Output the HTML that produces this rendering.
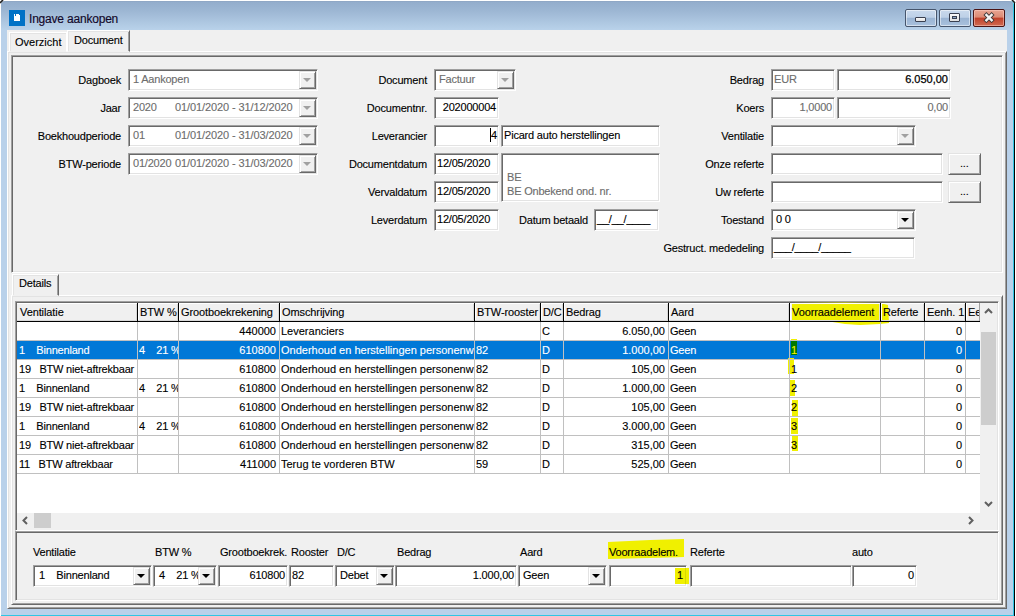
<!DOCTYPE html>
<html><head><meta charset="utf-8">
<style>
*{box-sizing:border-box;margin:0;padding:0}
html,body{width:1016px;height:616px;overflow:hidden;background:#fff}
body{position:relative;font-family:"Liberation Sans",sans-serif;font-size:11px;letter-spacing:-0.2px;color:#000;-webkit-text-stroke:0.12px}
.a{position:absolute}
.t{position:absolute;white-space:pre;line-height:13px}
.r{text-align:right}
.sunk{position:absolute;border:1px solid;border-color:#a0a0a0 #fff #fff #a0a0a0;box-shadow:inset 1px 1px 0 #696969,inset -1px -1px 0 #e3e3e3;background:#fff}
.sunkp{position:absolute;border:1px solid;border-color:#a0a0a0 #fff #fff #a0a0a0;box-shadow:inset 1px 1px 0 #696969,inset -1px -1px 0 #e3e3e3;background:#f0f0f0}
.raised{position:absolute;border:1px solid;border-color:#e3e3e3 #696969 #696969 #e3e3e3;box-shadow:inset 1px 1px 0 #fff,inset -1px -1px 0 #a0a0a0;background:#f0f0f0}
.tabp{position:absolute;border:1px solid;border-color:#fff #696969 #696969 #fff;box-shadow:inset 1px 1px 0 #e3e3e3,inset -1px -1px 0 #a0a0a0;background:#f0f0f0}
.gray{color:#6d6d6d}
.arr{position:absolute;width:0;height:0;border-left:4px solid transparent;border-right:4px solid transparent;border-top:4px solid #000}
.arr.dis{border-top-color:#a0a0a0}
</style></head><body>
<div class="a" style="left:1014px;top:3px;width:1px;height:613px;background:#000"></div>
<div class="a" style="left:1px;top:1px;width:1013px;height:615px;background:#b9d1ea;border-right:1px solid #2fc6e4;border-bottom:1px solid #2fc6e4;border-radius:4px 4px 0 0"></div>
<div class="a" style="left:1px;top:1px;width:1012px;height:29px;background:linear-gradient(#93adcc 0,#9cb6d3 30%,#b9d2ea 100%);border-top:1px solid #8fa7c5;border-radius:4px 4px 0 0"></div>
<svg class="a" style="left:0;top:0" width="4" height="4"><path d="M0 3 L3 0" stroke="#202020" stroke-width="1.6"/></svg>
<svg class="a" style="left:1011px;top:0" width="5" height="5"><path d="M1 0 L4 3" stroke="#202020" stroke-width="1.6"/></svg>
<div class="a" style="left:9px;top:10px;width:16px;height:16px;background:#0072c6"></div>
<div class="a" style="left:14px;top:14px;width:6px;height:7px;background:#fff"></div>
<div class="a" style="left:15px;top:14px;width:1px;height:2px;background:#0072c6"></div>
<div class="a" style="left:19px;top:14px;width:1px;height:1px;background:#0072c6"></div>
<div class="t " style="left:29px;top:12px;font-size:12px;line-height:15px;color:#12082a;-webkit-text-stroke:0.15px">Ingave aankopen</div>
<div class="a" style="left:905px;top:9px;width:32px;height:18px;border:1px solid #46556c;border-radius:2px;background:linear-gradient(#c9d9ec 0,#bdd0e7 46%,#9ab4d3 50%,#a9c1dd 100%);box-shadow:inset 0 0 0 1px rgba(255,255,255,.5)"></div>
<div class="a" style="left:915px;top:17px;width:11px;height:5px;background:linear-gradient(#fafafa,#e0e0e0);border:1px solid #3a4050;border-radius:1px"></div>
<div class="a" style="left:939px;top:9px;width:32px;height:18px;border:1px solid #46556c;border-radius:2px;background:linear-gradient(#c9d9ec 0,#bdd0e7 46%,#9ab4d3 50%,#a9c1dd 100%);box-shadow:inset 0 0 0 1px rgba(255,255,255,.5)"></div>
<div class="a" style="left:949px;top:13px;width:11px;height:9px;background:linear-gradient(#fafafa,#e0e0e0);border:1px solid #3a4050;border-radius:1px"></div>
<div class="a" style="left:952px;top:16px;width:5px;height:3px;background:#8fa7c6;border:1px solid #3a4050"></div>
<div class="a" style="left:973px;top:9px;width:32px;height:18px;border:1px solid #4a1414;border-radius:2px;background:linear-gradient(#e8a592 0,#dc8a74 45%,#c0402a 50%,#d06b52 100%);box-shadow:inset 0 0 0 1px rgba(255,210,200,.5)"></div>
<svg class="a" style="left:983px;top:12px" width="12" height="11" viewBox="0 0 12 11"><path d="M3.4 3 L8.6 8.2 M8.6 3 L3.4 8.2" stroke="#403838" stroke-width="4.2" stroke-linecap="square"/><path d="M3.4 3 L8.6 8.2 M8.6 3 L3.4 8.2" stroke="#f4f4f4" stroke-width="2.4" stroke-linecap="square"/></svg>
<div class="a" style="left:7px;top:30px;width:1000px;height:579px;background:#f0f0f0"></div>
<div class="tabp" style="left:7px;top:51px;width:1000px;height:558px;"></div>
<div class="a" style="left:9px;top:32px;width:58px;height:20px;border:1px solid;border-color:#fff #fff transparent #fff;box-shadow:inset 1px 1px 0 #e3e3e3;background:#f0f0f0"></div>
<div class="t " style="left:15px;top:36px;letter-spacing:0">Overzicht</div>
<div class="a" style="left:67px;top:30px;width:63px;height:22px;border:1px solid;border-color:#fff #696969 transparent #fff;box-shadow:inset 1px 1px 0 #e3e3e3,inset -1px 0 0 #a0a0a0;background:#f0f0f0"></div>
<div class="t " style="left:74px;top:34px;">Document</div>
<div class="sunkp" style="left:11px;top:55px;width:992px;height:218px;"></div>
<div class="t r " style="left:-179px;width:300px;top:74px;">Dagboek</div>
<div class="t r " style="left:-179px;width:300px;top:102px;">Jaar</div>
<div class="t r " style="left:-179px;width:300px;top:130px;">Boekhoudperiode</div>
<div class="t r " style="left:-179px;width:300px;top:158px;">BTW-periode</div>
<div class="sunk" style="left:128px;top:69px;width:190px;height:22px;"></div>
<div class="t gray" style="left:133px;top:73px;">1 Aankopen</div>
<div class="raised" style="left:299px;top:71px;width:17px;height:18px;"></div>
<div class="arr dis" style="left:303px;top:78px"></div>
<div class="sunk" style="left:128px;top:97px;width:190px;height:22px;"></div>
<div class="raised" style="left:299px;top:99px;width:17px;height:18px;"></div>
<div class="arr dis" style="left:303px;top:106px"></div>
<div class="t gray" style="left:133px;top:101px;">2020</div>
<div class="t gray" style="left:175px;top:101px;letter-spacing:-0.1px">01/01/2020 - 31/12/2020</div>
<div class="sunk" style="left:128px;top:125px;width:190px;height:22px;"></div>
<div class="raised" style="left:299px;top:127px;width:17px;height:18px;"></div>
<div class="arr dis" style="left:303px;top:134px"></div>
<div class="t gray" style="left:133px;top:129px;">01</div>
<div class="t gray" style="left:175px;top:129px;letter-spacing:-0.1px">01/01/2020 - 31/03/2020</div>
<div class="sunk" style="left:128px;top:153px;width:190px;height:22px;"></div>
<div class="raised" style="left:299px;top:155px;width:17px;height:18px;"></div>
<div class="arr dis" style="left:303px;top:162px"></div>
<div class="t gray" style="left:133px;top:157px;">01/2020</div>
<div class="t gray" style="left:175px;top:157px;letter-spacing:-0.1px">01/01/2020 - 31/03/2020</div>
<div class="t r " style="left:127px;width:300px;top:74px;">Document</div>
<div class="t r " style="left:127px;width:300px;top:102px;">Documentnr.</div>
<div class="t r " style="left:127px;width:300px;top:130px;">Leverancier</div>
<div class="t r " style="left:127px;width:300px;top:158px;">Documentdatum</div>
<div class="t r " style="left:127px;width:300px;top:186px;">Vervaldatum</div>
<div class="t r " style="left:127px;width:300px;top:214px;">Leverdatum</div>
<div class="sunk" style="left:434px;top:69px;width:82px;height:22px;"></div>
<div class="t gray" style="left:439px;top:73px;">Factuur</div>
<div class="raised" style="left:497px;top:71px;width:17px;height:18px;"></div>
<div class="arr dis" style="left:501px;top:78px"></div>
<div class="sunk" style="left:434px;top:97px;width:65px;height:22px;background:#fff"></div>
<div class="t r " style="left:196px;width:300px;top:101px;">202000004</div>
<div class="sunk" style="left:434px;top:125px;width:65px;height:22px;background:#fff"></div>
<div class="t r " style="left:197px;width:300px;top:129px;">4</div>
<div class="a" style="left:490px;top:128px;width:1px;height:14px;background:#000"></div>
<div class="sunk" style="left:501px;top:125px;width:159px;height:22px;background:#fff"></div>
<div class="t " style="left:504px;top:129px;">Picard auto herstellingen</div>
<div class="sunk" style="left:434px;top:153px;width:65px;height:22px;background:#fff"></div>
<div class="t " style="left:437px;top:157px;">12/05/2020</div>
<div class="sunk" style="left:501px;top:153px;width:159px;height:49px;"></div>
<div class="t gray" style="left:507px;top:171px;">BE</div>
<div class="t gray" style="left:507px;top:185px;">BE Onbekend ond. nr.</div>
<div class="sunk" style="left:434px;top:181px;width:65px;height:22px;background:#fff"></div>
<div class="t " style="left:437px;top:185px;">12/05/2020</div>
<div class="sunk" style="left:434px;top:209px;width:65px;height:22px;background:#fff"></div>
<div class="t " style="left:437px;top:213px;">12/05/2020</div>
<div class="t " style="left:519px;top:214px;">Datum betaald</div>
<div class="sunk" style="left:594px;top:209px;width:65px;height:22px;background:#fff"></div>
<div class="t " style="left:597px;top:213px;">__/__/____</div>
<div class="t r " style="left:464px;width:300px;top:74px;">Bedrag</div>
<div class="t r " style="left:464px;width:300px;top:102px;">Koers</div>
<div class="t r " style="left:464px;width:300px;top:130px;">Ventilatie</div>
<div class="t r " style="left:464px;width:300px;top:158px;">Onze referte</div>
<div class="t r " style="left:464px;width:300px;top:186px;">Uw referte</div>
<div class="t r " style="left:464px;width:300px;top:214px;">Toestand</div>
<div class="t r " style="left:464px;width:300px;top:242px;">Gestruct. mededeling</div>
<div class="sunk" style="left:771px;top:69px;width:64px;height:22px;background:#fff"></div>
<div class="t gray" style="left:774px;top:73px;">EUR</div>
<div class="sunk" style="left:837px;top:69px;width:114px;height:22px;background:#fff"></div>
<div class="t r " style="left:648px;width:300px;top:73px;-webkit-text-stroke:0.25px;letter-spacing:0">6.050,00</div>
<div class="sunk" style="left:771px;top:97px;width:64px;height:22px;background:#fff"></div>
<div class="t r gray" style="left:532px;width:300px;top:101px;">1,0000</div>
<div class="sunk" style="left:837px;top:97px;width:114px;height:22px;background:#fff"></div>
<div class="t r gray" style="left:648px;width:300px;top:101px;">0,00</div>
<div class="sunk" style="left:771px;top:125px;width:145px;height:22px;"></div>
<div class="raised" style="left:897px;top:127px;width:17px;height:18px;"></div>
<div class="arr dis" style="left:901px;top:134px"></div>
<div class="sunk" style="left:771px;top:153px;width:172px;height:22px;background:#fff"></div>
<div class="raised" style="left:948px;top:153px;width:33px;height:22px;"></div>
<div class="t " style="left:960px;top:157px;">...</div>
<div class="sunk" style="left:771px;top:181px;width:172px;height:22px;background:#fff"></div>
<div class="raised" style="left:948px;top:181px;width:33px;height:22px;"></div>
<div class="t " style="left:960px;top:185px;">...</div>
<div class="sunk" style="left:771px;top:209px;width:145px;height:22px;"></div>
<div class="t " style="left:776px;top:213px;">0 0</div>
<div class="raised" style="left:897px;top:211px;width:17px;height:18px;"></div>
<div class="arr" style="left:901px;top:218px"></div>
<div class="sunk" style="left:771px;top:237px;width:144px;height:22px;background:#fff"></div>
<div class="t " style="left:774px;top:241px;">___/____/_____</div>
<div class="tabp" style="left:11px;top:295px;width:992px;height:310px;"></div>
<div class="a" style="left:12px;top:274px;width:47px;height:22px;border:1px solid;border-color:#fff #696969 transparent #fff;box-shadow:inset 1px 1px 0 #e3e3e3,inset -1px 0 0 #a0a0a0;background:#f0f0f0"></div>
<div class="t " style="left:19px;top:277px;">Details</div>
<div class="sunk" style="left:15px;top:301px;width:984px;height:230px;"></div>
<div class="a" style="left:17px;top:303px;width:963px;height:18px;background:#f0f0f0"></div>
<div class="a" style="left:17px;top:322px;width:963px;height:191px;background:#fff"></div>
<svg class="a" style="left:0;top:0" width="1016" height="616"><path d="M792 303 L845 302.5 L880 303 L888 305 L889 323 L880 324 L860 325 L845 324 L820 320 L792 320 Z" fill="#f0f000"/></svg>
<div class="a" style="left:17px;top:303px;width:963px;height:1px;background:#fff"></div>
<div class="a" style="left:17px;top:320px;width:963px;height:1px;background:#d8d8d8"></div>
<div class="a" style="left:17px;top:321px;width:963px;height:1px;background:#000"></div>
<div class="a" style="left:136px;top:304px;width:1px;height:17px;background:#d8d8d8"></div>
<div class="a" style="left:138px;top:303px;width:1px;height:17px;background:#fff"></div>
<div class="a" style="left:177px;top:304px;width:1px;height:17px;background:#d8d8d8"></div>
<div class="a" style="left:179px;top:303px;width:1px;height:17px;background:#fff"></div>
<div class="a" style="left:278px;top:304px;width:1px;height:17px;background:#d8d8d8"></div>
<div class="a" style="left:280px;top:303px;width:1px;height:17px;background:#fff"></div>
<div class="a" style="left:473px;top:304px;width:1px;height:17px;background:#d8d8d8"></div>
<div class="a" style="left:475px;top:303px;width:1px;height:17px;background:#fff"></div>
<div class="a" style="left:539px;top:304px;width:1px;height:17px;background:#d8d8d8"></div>
<div class="a" style="left:541px;top:303px;width:1px;height:17px;background:#fff"></div>
<div class="a" style="left:562px;top:304px;width:1px;height:17px;background:#d8d8d8"></div>
<div class="a" style="left:564px;top:303px;width:1px;height:17px;background:#fff"></div>
<div class="a" style="left:667px;top:304px;width:1px;height:17px;background:#d8d8d8"></div>
<div class="a" style="left:669px;top:303px;width:1px;height:17px;background:#fff"></div>
<div class="a" style="left:788px;top:304px;width:1px;height:17px;background:#d8d8d8"></div>
<div class="a" style="left:790px;top:303px;width:1px;height:17px;background:#fff"></div>
<div class="a" style="left:879px;top:304px;width:1px;height:17px;background:#d8d8d8"></div>
<div class="a" style="left:881px;top:303px;width:1px;height:17px;background:#fff"></div>
<div class="a" style="left:923px;top:304px;width:1px;height:17px;background:#d8d8d8"></div>
<div class="a" style="left:925px;top:303px;width:1px;height:17px;background:#fff"></div>
<div class="a" style="left:964px;top:304px;width:1px;height:17px;background:#d8d8d8"></div>
<div class="a" style="left:966px;top:303px;width:1px;height:17px;background:#fff"></div>
<div class="a" style="left:137px;top:303px;width:1px;height:19px;background:#000"></div>
<div class="a" style="left:178px;top:303px;width:1px;height:19px;background:#000"></div>
<div class="a" style="left:279px;top:303px;width:1px;height:19px;background:#000"></div>
<div class="a" style="left:474px;top:303px;width:1px;height:19px;background:#000"></div>
<div class="a" style="left:540px;top:303px;width:1px;height:19px;background:#000"></div>
<div class="a" style="left:563px;top:303px;width:1px;height:19px;background:#000"></div>
<div class="a" style="left:668px;top:303px;width:1px;height:19px;background:#000"></div>
<div class="a" style="left:789px;top:303px;width:1px;height:19px;background:#000"></div>
<div class="a" style="left:880px;top:303px;width:1px;height:19px;background:#000"></div>
<div class="a" style="left:924px;top:303px;width:1px;height:19px;background:#000"></div>
<div class="a" style="left:965px;top:303px;width:1px;height:19px;background:#000"></div>
<div class="a" style="left:979px;top:303px;width:1px;height:18px;background:#a0a0a0"></div>
<div class="t " style="left:20px;top:306px;letter-spacing:-0.1px">Ventilatie</div>
<div class="t " style="left:140px;top:306px;letter-spacing:-0.1px">BTW %</div>
<div class="t " style="left:181px;top:306px;letter-spacing:-0.1px">Grootboekrekening</div>
<div class="t " style="left:282px;top:306px;letter-spacing:-0.1px">Omschrijving</div>
<div class="t " style="left:477px;top:306px;letter-spacing:-0.1px">BTW-rooster</div>
<div class="t " style="left:543px;top:306px;letter-spacing:-0.1px">D/C</div>
<div class="t " style="left:566px;top:306px;letter-spacing:-0.1px">Bedrag</div>
<div class="t " style="left:671px;top:306px;letter-spacing:-0.1px">Aard</div>
<div class="t " style="left:792px;top:306px;letter-spacing:-0.1px">Voorraadelement</div>
<div class="t " style="left:883px;top:306px;letter-spacing:-0.1px">Referte</div>
<div class="t " style="left:927px;top:306px;letter-spacing:-0.1px">Eenh. 1</div>
<div class="t " style="left:968px;top:306px;overflow:hidden;width:11px;letter-spacing:-0.1px">Ee</div>
<div class="a" style="left:17px;top:341px;width:963px;height:18px;background:#0078d7"></div>
<div class="a" style="left:791px;top:339px;width:6px;height:2px;background:#f0f000"></div>
<div class="a" style="left:791px;top:341px;width:6px;height:14px;background:#007800"></div>
<div class="a" style="left:788px;top:358px;width:6px;height:16px;background:#f0f000"></div>
<div class="a" style="left:789px;top:380px;width:6px;height:16px;background:#f0f000"></div>
<div class="a" style="left:792px;top:400px;width:6px;height:16px;background:#f0f000"></div>
<div class="a" style="left:791px;top:418px;width:7px;height:16px;background:#f0f000"></div>
<div class="a" style="left:792px;top:435px;width:6px;height:16px;background:#f0f000"></div>
<div class="a" style="left:17px;top:340px;width:963px;height:1px;background:#c0c0c0"></div>
<div class="a" style="left:17px;top:359px;width:963px;height:1px;background:#c0c0c0"></div>
<div class="a" style="left:17px;top:378px;width:963px;height:1px;background:#c0c0c0"></div>
<div class="a" style="left:17px;top:397px;width:963px;height:1px;background:#c0c0c0"></div>
<div class="a" style="left:17px;top:416px;width:963px;height:1px;background:#c0c0c0"></div>
<div class="a" style="left:17px;top:435px;width:963px;height:1px;background:#c0c0c0"></div>
<div class="a" style="left:17px;top:454px;width:963px;height:1px;background:#c0c0c0"></div>
<div class="a" style="left:17px;top:473px;width:963px;height:1px;background:#c0c0c0"></div>
<div class="a" style="left:137px;top:322px;width:1px;height:152px;background:#c0c0c0"></div>
<div class="a" style="left:178px;top:322px;width:1px;height:152px;background:#c0c0c0"></div>
<div class="a" style="left:279px;top:322px;width:1px;height:152px;background:#c0c0c0"></div>
<div class="a" style="left:474px;top:322px;width:1px;height:152px;background:#c0c0c0"></div>
<div class="a" style="left:540px;top:322px;width:1px;height:152px;background:#c0c0c0"></div>
<div class="a" style="left:563px;top:322px;width:1px;height:152px;background:#c0c0c0"></div>
<div class="a" style="left:668px;top:322px;width:1px;height:152px;background:#c0c0c0"></div>
<div class="a" style="left:789px;top:322px;width:1px;height:152px;background:#c0c0c0"></div>
<div class="a" style="left:880px;top:322px;width:1px;height:152px;background:#c0c0c0"></div>
<div class="a" style="left:924px;top:322px;width:1px;height:152px;background:#c0c0c0"></div>
<div class="a" style="left:965px;top:322px;width:1px;height:152px;background:#c0c0c0"></div>
<div class="t r " style="left:-24px;width:300px;top:325px;color:#000;letter-spacing:0">440000</div>
<div class="t " style="left:281px;top:325px;color:#000;letter-spacing:0;overflow:hidden;width:193px">Leveranciers</div>
<div class="t " style="left:542px;top:325px;color:#000;overflow:hidden;width:21px">C</div>
<div class="t r " style="left:365px;width:300px;top:325px;color:#000;letter-spacing:0">6.050,00</div>
<div class="t " style="left:670px;top:325px;color:#000;overflow:hidden;width:119px">Geen</div>
<div class="t r " style="left:662px;width:300px;top:325px;color:#000;letter-spacing:0">0</div>
<div class="t " style="left:19px;top:344px;color:#fff;overflow:hidden;width:118px">1    Binnenland</div>
<div class="t " style="left:139px;top:344px;color:#fff;overflow:hidden;width:39px">4    21 %</div>
<div class="t r " style="left:-24px;width:300px;top:344px;color:#fff;letter-spacing:0">610800</div>
<div class="t " style="left:281px;top:344px;color:#fff;letter-spacing:0;overflow:hidden;width:193px">Onderhoud en herstellingen personenw</div>
<div class="t " style="left:476px;top:344px;color:#fff;overflow:hidden;width:64px">82</div>
<div class="t " style="left:542px;top:344px;color:#fff;overflow:hidden;width:21px">D</div>
<div class="t r " style="left:365px;width:300px;top:344px;color:#fff;letter-spacing:0">1.000,00</div>
<div class="t " style="left:670px;top:344px;color:#fff;overflow:hidden;width:119px">Geen</div>
<div class="t " style="left:791px;top:344px;color:#f0f000;overflow:hidden;width:89px">1</div>
<div class="t r " style="left:662px;width:300px;top:344px;color:#fff;letter-spacing:0">0</div>
<div class="t " style="left:19px;top:363px;color:#000;overflow:hidden;width:118px">19   BTW niet-aftrekbaar</div>
<div class="t r " style="left:-24px;width:300px;top:363px;color:#000;letter-spacing:0">610800</div>
<div class="t " style="left:281px;top:363px;color:#000;letter-spacing:0;overflow:hidden;width:193px">Onderhoud en herstellingen personenw</div>
<div class="t " style="left:476px;top:363px;color:#000;overflow:hidden;width:64px">82</div>
<div class="t " style="left:542px;top:363px;color:#000;overflow:hidden;width:21px">D</div>
<div class="t r " style="left:365px;width:300px;top:363px;color:#000;letter-spacing:0">105,00</div>
<div class="t " style="left:670px;top:363px;color:#000;overflow:hidden;width:119px">Geen</div>
<div class="t " style="left:791px;top:363px;color:#000;overflow:hidden;width:89px">1</div>
<div class="t r " style="left:662px;width:300px;top:363px;color:#000;letter-spacing:0">0</div>
<div class="t " style="left:19px;top:382px;color:#000;overflow:hidden;width:118px">1    Binnenland</div>
<div class="t " style="left:139px;top:382px;color:#000;overflow:hidden;width:39px">4    21 %</div>
<div class="t r " style="left:-24px;width:300px;top:382px;color:#000;letter-spacing:0">610800</div>
<div class="t " style="left:281px;top:382px;color:#000;letter-spacing:0;overflow:hidden;width:193px">Onderhoud en herstellingen personenw</div>
<div class="t " style="left:476px;top:382px;color:#000;overflow:hidden;width:64px">82</div>
<div class="t " style="left:542px;top:382px;color:#000;overflow:hidden;width:21px">D</div>
<div class="t r " style="left:365px;width:300px;top:382px;color:#000;letter-spacing:0">1.000,00</div>
<div class="t " style="left:670px;top:382px;color:#000;overflow:hidden;width:119px">Geen</div>
<div class="t " style="left:791px;top:382px;color:#000;overflow:hidden;width:89px">2</div>
<div class="t r " style="left:662px;width:300px;top:382px;color:#000;letter-spacing:0">0</div>
<div class="t " style="left:19px;top:401px;color:#000;overflow:hidden;width:118px">19   BTW niet-aftrekbaar</div>
<div class="t r " style="left:-24px;width:300px;top:401px;color:#000;letter-spacing:0">610800</div>
<div class="t " style="left:281px;top:401px;color:#000;letter-spacing:0;overflow:hidden;width:193px">Onderhoud en herstellingen personenw</div>
<div class="t " style="left:476px;top:401px;color:#000;overflow:hidden;width:64px">82</div>
<div class="t " style="left:542px;top:401px;color:#000;overflow:hidden;width:21px">D</div>
<div class="t r " style="left:365px;width:300px;top:401px;color:#000;letter-spacing:0">105,00</div>
<div class="t " style="left:670px;top:401px;color:#000;overflow:hidden;width:119px">Geen</div>
<div class="t " style="left:791px;top:401px;color:#000;overflow:hidden;width:89px">2</div>
<div class="t r " style="left:662px;width:300px;top:401px;color:#000;letter-spacing:0">0</div>
<div class="t " style="left:19px;top:420px;color:#000;overflow:hidden;width:118px">1    Binnenland</div>
<div class="t " style="left:139px;top:420px;color:#000;overflow:hidden;width:39px">4    21 %</div>
<div class="t r " style="left:-24px;width:300px;top:420px;color:#000;letter-spacing:0">610800</div>
<div class="t " style="left:281px;top:420px;color:#000;letter-spacing:0;overflow:hidden;width:193px">Onderhoud en herstellingen personenw</div>
<div class="t " style="left:476px;top:420px;color:#000;overflow:hidden;width:64px">82</div>
<div class="t " style="left:542px;top:420px;color:#000;overflow:hidden;width:21px">D</div>
<div class="t r " style="left:365px;width:300px;top:420px;color:#000;letter-spacing:0">3.000,00</div>
<div class="t " style="left:670px;top:420px;color:#000;overflow:hidden;width:119px">Geen</div>
<div class="t " style="left:791px;top:420px;color:#000;overflow:hidden;width:89px">3</div>
<div class="t r " style="left:662px;width:300px;top:420px;color:#000;letter-spacing:0">0</div>
<div class="t " style="left:19px;top:439px;color:#000;overflow:hidden;width:118px">19   BTW niet-aftrekbaar</div>
<div class="t r " style="left:-24px;width:300px;top:439px;color:#000;letter-spacing:0">610800</div>
<div class="t " style="left:281px;top:439px;color:#000;letter-spacing:0;overflow:hidden;width:193px">Onderhoud en herstellingen personenw</div>
<div class="t " style="left:476px;top:439px;color:#000;overflow:hidden;width:64px">82</div>
<div class="t " style="left:542px;top:439px;color:#000;overflow:hidden;width:21px">D</div>
<div class="t r " style="left:365px;width:300px;top:439px;color:#000;letter-spacing:0">315,00</div>
<div class="t " style="left:670px;top:439px;color:#000;overflow:hidden;width:119px">Geen</div>
<div class="t " style="left:791px;top:439px;color:#000;overflow:hidden;width:89px">3</div>
<div class="t r " style="left:662px;width:300px;top:439px;color:#000;letter-spacing:0">0</div>
<div class="t " style="left:19px;top:458px;color:#000;overflow:hidden;width:118px">11   BTW aftrekbaar</div>
<div class="t r " style="left:-24px;width:300px;top:458px;color:#000;letter-spacing:0">411000</div>
<div class="t " style="left:281px;top:458px;color:#000;letter-spacing:0;overflow:hidden;width:193px">Terug te vorderen BTW</div>
<div class="t " style="left:476px;top:458px;color:#000;overflow:hidden;width:64px">59</div>
<div class="t " style="left:542px;top:458px;color:#000;overflow:hidden;width:21px">D</div>
<div class="t r " style="left:365px;width:300px;top:458px;color:#000;letter-spacing:0">525,00</div>
<div class="t " style="left:670px;top:458px;color:#000;overflow:hidden;width:119px">Geen</div>
<div class="t r " style="left:662px;width:300px;top:458px;color:#000;letter-spacing:0">0</div>
<div class="a" style="left:980px;top:303px;width:17px;height:210px;background:#f0f0f0"></div>
<div class="a" style="left:981px;top:332px;width:15px;height:93px;background:#cdcdcd"></div>
<svg class="a" style="left:984px;top:308px" width="9" height="6" viewBox="0 0 9 6"><path d="M1 5 L4.5 1.5 L8 5" fill="none" stroke="#606060" stroke-width="2"/></svg>
<svg class="a" style="left:984px;top:501px" width="9" height="6" viewBox="0 0 9 6"><path d="M1 1 L4.5 4.5 L8 1" fill="none" stroke="#606060" stroke-width="2"/></svg>
<div class="a" style="left:17px;top:513px;width:980px;height:17px;background:#f0f0f0"></div>
<div class="a" style="left:34px;top:513px;width:17px;height:15px;background:#cdcdcd"></div>
<svg class="a" style="left:22px;top:516px" width="6" height="9" viewBox="0 0 6 9"><path d="M5 1 L1.5 4.5 L5 8" fill="none" stroke="#606060" stroke-width="2"/></svg>
<svg class="a" style="left:968px;top:516px" width="6" height="9" viewBox="0 0 6 9"><path d="M1 1 L4.5 4.5 L1 8" fill="none" stroke="#606060" stroke-width="2"/></svg>
<div class="sunkp" style="left:15px;top:531px;width:984px;height:70px;"></div>
<svg class="a" style="left:0;top:0" width="1016" height="616"><path d="M608 542 L650 540 L684 539 L684 557 L650 558 L608 559 Z" fill="#f0f000"/></svg>
<div class="t " style="left:33px;top:546px;">Ventilatie</div>
<div class="t " style="left:155px;top:546px;">BTW %</div>
<div class="t " style="left:220px;top:546px;">Grootboekrek.</div>
<div class="t " style="left:291px;top:546px;">Rooster</div>
<div class="t " style="left:337px;top:546px;">D/C</div>
<div class="t " style="left:397px;top:546px;">Bedrag</div>
<div class="t " style="left:520px;top:546px;">Aard</div>
<div class="t " style="left:609px;top:546px;">Voorraadelem.</div>
<div class="t " style="left:690px;top:546px;">Referte</div>
<div class="t " style="left:852px;top:546px;">auto</div>
<div class="sunk" style="left:33px;top:565px;width:119px;height:22px;"></div>
<div class="t " style="left:39px;top:569px;">1    Binnenland</div>
<div class="raised" style="left:133px;top:567px;width:17px;height:18px;"></div>
<div class="arr" style="left:137px;top:574px"></div>
<div class="sunk" style="left:153px;top:565px;width:64px;height:22px;"></div>
<div class="t " style="left:159px;top:569px;">4    21 %</div>
<div class="raised" style="left:198px;top:567px;width:17px;height:18px;"></div>
<div class="arr" style="left:202px;top:574px"></div>
<div class="sunk" style="left:218px;top:565px;width:70px;height:22px;background:#fff"></div>
<div class="t r " style="left:-15px;width:300px;top:569px;">610800</div>
<div class="sunk" style="left:289px;top:565px;width:45px;height:22px;background:#fff"></div>
<div class="t " style="left:292px;top:569px;">82</div>
<div class="sunk" style="left:335px;top:565px;width:60px;height:22px;"></div>
<div class="t " style="left:340px;top:569px;">Debet</div>
<div class="raised" style="left:376px;top:567px;width:17px;height:18px;"></div>
<div class="arr" style="left:380px;top:574px"></div>
<div class="sunk" style="left:395px;top:565px;width:122px;height:22px;background:#fff"></div>
<div class="t r " style="left:214px;width:300px;top:569px;">1.000,00</div>
<div class="sunk" style="left:518px;top:565px;width:89px;height:22px;"></div>
<div class="t " style="left:523px;top:569px;">Geen</div>
<div class="raised" style="left:588px;top:567px;width:17px;height:18px;"></div>
<div class="arr" style="left:592px;top:574px"></div>
<div class="sunk" style="left:609px;top:565px;width:78px;height:22px;"></div>
<div class="a" style="left:675px;top:568px;width:14px;height:16px;background:#f0f000"></div>
<div class="a" style="left:685px;top:568px;width:1px;height:16px;background:#d8d800"></div>
<div class="a" style="left:686px;top:568px;width:1px;height:16px;background:#f0f000"></div>
<div class="t r " style="left:383px;width:300px;top:569px;">1</div>
<div class="sunk" style="left:690px;top:565px;width:162px;height:22px;background:#fff"></div>
<div class="sunk" style="left:852px;top:565px;width:65px;height:22px;background:#fff"></div>
<div class="t r " style="left:614px;width:300px;top:569px;">0</div>
</body></html>
